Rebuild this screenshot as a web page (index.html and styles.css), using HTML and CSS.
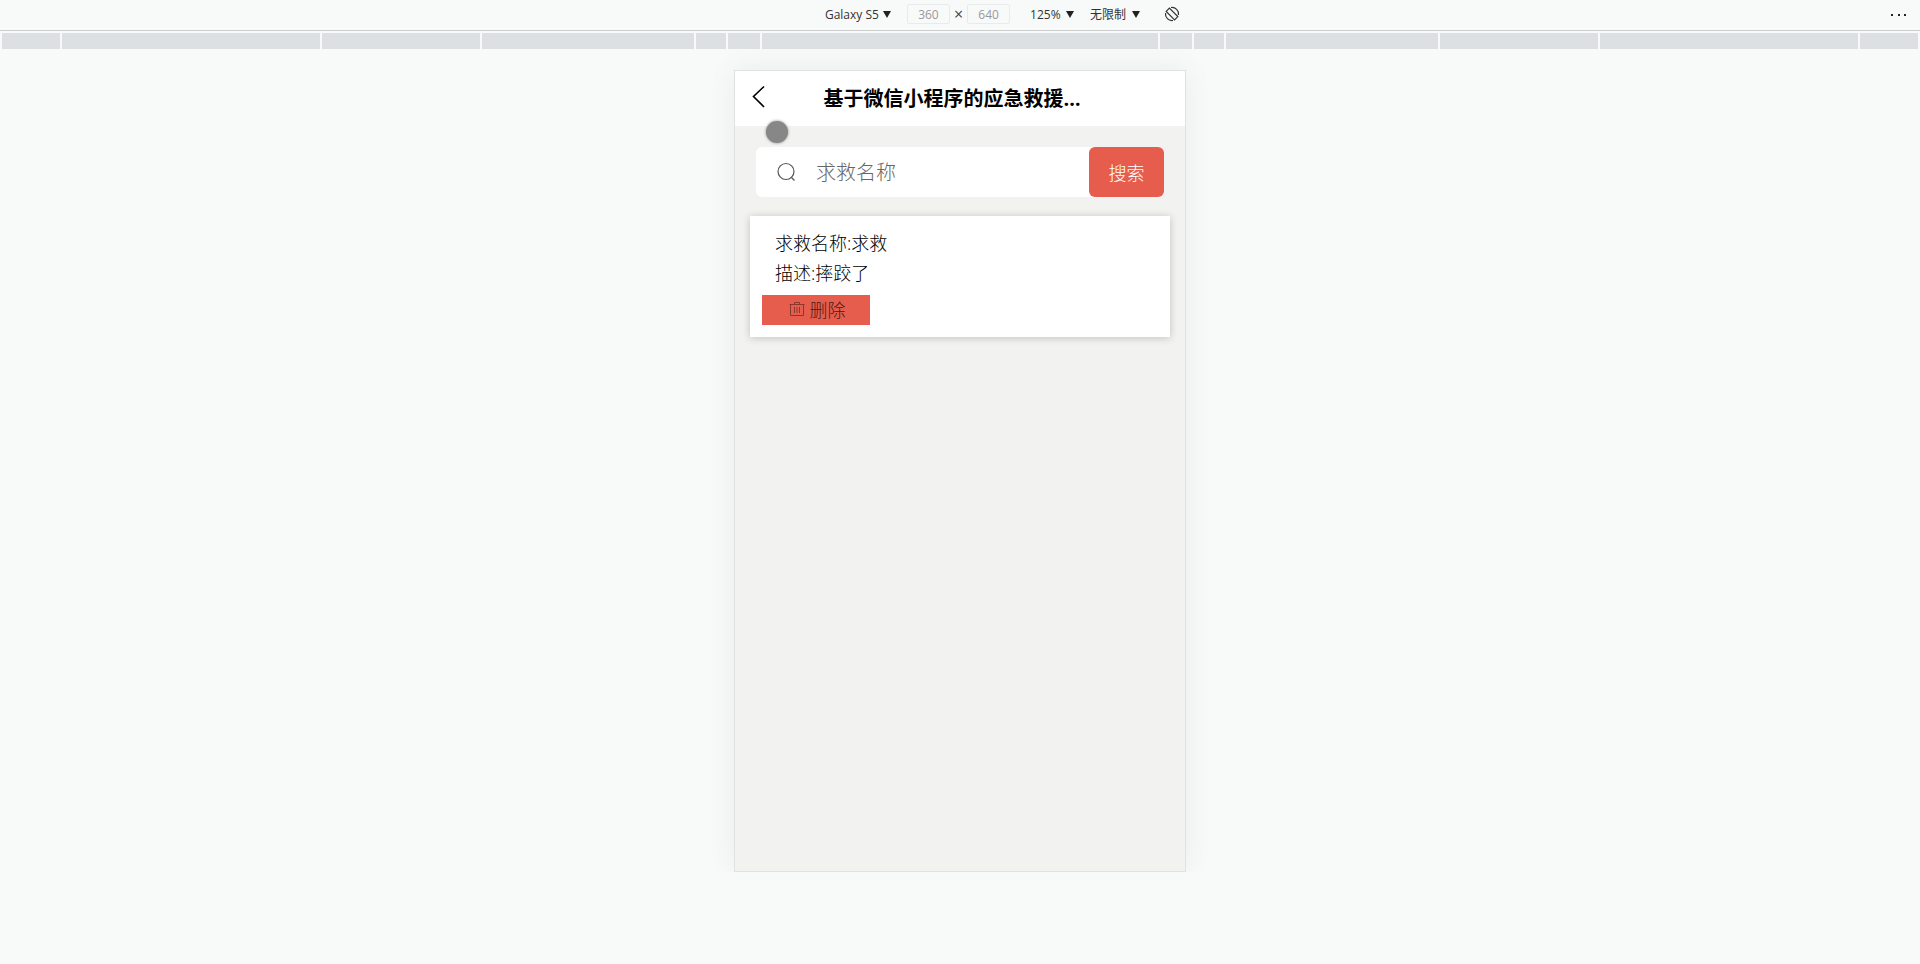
FILE: index.html
```html
<!DOCTYPE html>
<html lang="zh-CN">
<head>
    <meta charset="UTF-8">
    <meta name="viewport" content="width=device-width, initial-scale=1.0">
    <title>基于微信小程序的应急救援</title>
    <link rel="stylesheet" href="styles.css">
</head>
<body>
    <div class="toolbar">
        <div class="tools">
            <div class="picker device">
                <select aria-label="device"><option>Galaxy S5</option></select>
            </div>
            <div class="size">
                <input type="text" value="360" aria-label="width">
                <span>×</span>
                <input type="text" value="640" aria-label="height">
            </div>
            <div class="picker zoom">
                <select aria-label="zoom"><option>125%</option></select>
            </div>
            <div class="picker">
                <select aria-label="throttling"><option>无限制</option></select>
            </div>
            <button class="rotate" aria-label="rotate">
                <svg width="16" height="16" viewBox="0 0 16 16" fill="none" stroke="#333" stroke-width="1.2">
                    <path d="M2.2 5.4 L5.4 2.2 L13.8 10.6 L10.6 13.8 Z"/>
                    <path d="M7 1.5 A6.6 6.6 0 0 1 14.5 9"/>
                    <path d="M1.5 7 A6.6 6.6 0 0 0 9 14.5"/>
                </svg>
            </button>
        </div>
        <button class="more" aria-label="more">
            <svg width="16" height="4" viewBox="0 0 16 4" fill="#222">
                <rect x="0" y="1" width="2" height="2"/>
                <rect x="7" y="1" width="2" height="2"/>
                <rect x="13" y="1" width="2" height="2"/>
            </svg>
        </button>
    </div>

    <!-- breakpoints ruler -->
    <div class="ruler">
        <div class="s58"></div>
        <div class="s258"></div>
        <div class="s158"></div>
        <div class="s212"></div>
        <div class="s30"></div>
        <div class="s32"></div>
        <div class="s396"></div>
        <div class="s32"></div>
        <div class="s30"></div>
        <div class="s212"></div>
        <div class="s158"></div>
        <div class="s258"></div>
        <div class="s58"></div>
    </div>

    <div class="phone">
        <header class="head">
            <button class="back" aria-label="返回">
                <svg width="14" height="24" viewBox="0 0 14 24" fill="none" stroke="#000" stroke-width="1.6">
                    <path d="M12 1.5 L1.5 11.5 L12 22"/>
                </svg>
            </button>
            <h1>基于微信小程序的应急救援…</h1>
        </header>
        <form class="search">
            <label class="box">
                <svg width="20" height="20" viewBox="0 0 20 20" fill="none" stroke="#555" stroke-width="1.2">
                    <circle cx="9" cy="9.5" r="8"/>
                    <path d="M14 15 L17.5 18.5"/>
                </svg>
                <input type="text" placeholder="求救名称" aria-label="求救名称">
            </label>
            <button type="button">搜索</button>
        </form>
        <div class="card">
            <p>求救名称:求救</p>
            <p>描述:摔跤了</p>
            <button class="delete">
                <svg width="16" height="16" viewBox="0 0 16 16" fill="none" stroke="#8a382e" stroke-width="1">
                    <path d="M0.5 3.5 H15.5 M5.5 3.5 V1.5 H10.5 V3.5 M1.5 3.5 V14.5 H14.5 V3.5 M5.5 6 V12 M8 6 V12 M10.5 6 V12"/>
                </svg>
                删除
            </button>
        </div>
        <div class="touch"></div>
    </div>
</body>
</html>
```

FILE: styles.css
```css
body{
    margin: 0;
    background: #f8faf9;
    font-family: "Open Sans", "Noto Sans CJK SC", sans-serif;
    color: #000;
}
button, input, select{
    font-family: inherit;
    border: 0;
    padding: 0;
    margin: 0;
    background: none;
}
svg{
    display: block;
}

/* toolbar */
.toolbar{
    display: flex;
    align-items: center;
    height: 30px;
    border-bottom: 1px solid #cbcdcd;
    padding-right: 13px;
}
.tools{
    display: flex;
    flex: 1;
    align-items: center;
    justify-content: center;
    gap: 16px;
    padding: 0 0 2px 114px;
}
.picker{
    display: flex;
    align-items: center;
    gap: 5px;
}
.picker::after{
    content: "";
    border: 4px solid transparent;
    border-top: 7px solid #222;
    border-bottom: 0;
}
.picker select{
    appearance: none;
    font-size: 12px;
    color: #333;
}
.device{
    gap: 4px;
}
.zoom{
    margin-left: 4px;
}
.size{
    display: flex;
    align-items: center;
    gap: 4px;
    font-size: 12px;
    color: #444;
}
.size span{
    font-size: 16px;
    line-height: 16px;
}
.size input{
    box-sizing: border-box;
    width: 43px;
    height: 20px;
    border: 1px solid #e9ebeb;
    border-radius: 2px;
    text-align: center;
    font-size: 12px;
    color: #999;
}
.rotate{
    margin-left: 8px;
}

.ruler{
    display: flex;
    gap: 2px;
    height: 16px;
    margin: 2px 2px 21px;
}
.ruler div{
    background: #dde0e3;
}
.s30{
    flex: 30;
}
.s32{
    flex: 32;
}
.s58{
    flex: 58;
}
.s158{
    flex: 158;
}
.s212{
    flex: 212;
}
.s258{
    flex: 258;
}
.s396{
    flex: 396;
}

/* phone */
.phone{
    position: relative;
    width: 450px;
    min-height: 800px;
    margin: 0 auto;
    border: 1px solid #dfe2e3;
    background: #f2f2f1;
    box-shadow: 0 0 30px rgba(0,0,0,0.06);
}
.head{
    display: flex;
    align-items: center;
    height: 55px;
    padding: 0 17px;
    background: #fff;
}
.back{
    padding-bottom: 3px;
}
.head h1{
    flex: 1;
    margin: 0;
    padding-right: 30px;
    text-align: center;
    font-size: 20px;
    line-height: 28px;
}
.search{
    display: flex;
    height: 50px;
    margin: 21px 21px 19px;
    background: #fff;
    border-radius: 6px;
}
.box{
    display: flex;
    flex: 1;
    align-items: center;
    gap: 19px;
    padding-left: 21px;
}
.box input{
    flex: 1;
    min-width: 0;
    font-size: 20px;
    font-weight: 300;
    outline: 0;
}
.box input::placeholder{
    color: #666;
}
.search button{
    width: 75px;
    border-radius: 6px;
    background: #e65c4d;
    color: #fff;
    font-size: 18px;
    font-weight: 300;
}
.card{
    margin: 0 15px;
    padding: 12px;
    background: #fff;
    box-shadow: 0 1px 8px rgba(0,0,0,0.2);
}
.card p{
    margin: 0;
    padding-left: 13px;
    font-size: 18px;
    font-weight: 300;
    line-height: 30px;
}
.delete{
    display: flex;
    align-items: center;
    justify-content: center;
    gap: 5px;
    width: 108px;
    height: 30px;
    margin-top: 7px;
    padding: 0 0 2px 2px;
    background: #e65c4d;
    color: #4a1d18;
    font-size: 18px;
    font-weight: 300;
}
/* finger cursor of the emulator */
.touch{
    position: absolute;
    left: 31px;
    top: 50px;
    width: 22px;
    height: 22px;
    border-radius: 50%;
    background: #878787;
    box-shadow: 0 0 3px #878787;
}
```
